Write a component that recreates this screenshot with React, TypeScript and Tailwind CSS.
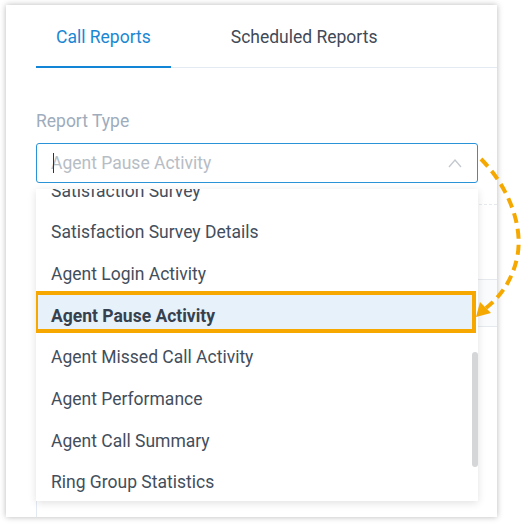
import React from "react";

const items = [
  "Satisfaction Survey",
  "Satisfaction Survey Details",
  "Agent Login Activity",
  "Agent Pause Activity",
  "Agent Missed Call Activity",
  "Agent Performance",
  "Agent Call Summary",
  "Ring Group Statistics",
];

export default function App() {
  return (
    <div
      className="relative w-[521px] h-[526px] bg-white overflow-hidden"
      style={{ fontFamily: "Roboto, 'Noto Sans', sans-serif" }}
    >
      <div className="ml-[6px] mt-[5px] w-[491px] h-[512px] bg-white shadow-[0_0_6px_rgba(0,0,0,0.28)] pl-[30px] pr-[19px] overflow-hidden">
        {/* Tabs */}
        <div className="flex h-[63px] border-b border-[#e4eaf1] -mr-[19px]">
          <div className="relative px-5 pt-[20px] text-[17.5px] leading-6 text-[#1a87d3]">
            Call Reports
            <div className="absolute left-0 right-0 -bottom-px h-[2px] bg-[#1285d6]" />
          </div>
          <div className="ml-10 px-5 pt-[20px] text-[17.5px] leading-6 text-[#3f4a58]">
            Scheduled Reports
          </div>
        </div>

        {/* Label */}
        <div className="mt-[41px] text-[17.5px] leading-6 text-[#9eacbc]">Report Type</div>

        {/* Input + dropdown */}
        <div className="relative mt-[10px]">
          <div className="flex items-center h-[40px] rounded-[3px] border border-[#2a93d8] pl-[14px] pr-[14px]">
            <div className="relative flex-1 text-[17.5px] leading-6 text-[#b7bdc5]">
              <span className="absolute left-[2px] top-[2px] w-px h-[20px] bg-[#333]" />
              Agent Pause Activity
            </div>
            <svg width="14" height="10" viewBox="0 0 14 10" className="mr-[1px]">
              <path d="M1 9 L7 2 L13 9" fill="none" stroke="#c3c8ce" strokeWidth="1.3" />
            </svg>
          </div>

          {/* underlying content */}
          <div className="mt-[21px] border-t border-dashed border-[#e6eaef] -mr-[19px]" />
          <div className="mt-[74px] -mr-[19px] border-l border-[#e3e9f0]">
            <div className="h-[48px] bg-[#fafbfc] border-t border-b border-[#e6eaef]" />
            <div className="h-[200px]" />
          </div>

          {/* Dropdown */}
          <div className="absolute left-0 top-[46px] w-[442px] h-[312px] bg-white shadow-[0_2px_8px_rgba(0,0,0,0.12)] overflow-hidden">
            <div className="-mt-[19px]">
              {items.map((it) => {
                const active = it === "Agent Pause Activity";
                return (
                  <div
                    key={it}
                    className={
                      "relative flex items-center h-[41.67px] px-[15px] text-[17.5px] " +
                      (active ? "font-bold text-[#37414e]" : "text-[#434e5c]")
                    }
                  >
                    {active && (
                      <div className="absolute left-[-2px] right-[2px] top-[-4px] h-[42px] border-4 border-[#f6a800] bg-[#e6f1fa]" />
                    )}
                    <span className="relative">{it}</span>
                  </div>
                );
              })}
            </div>
            <div className="absolute right-0 top-[163px] w-[6px] h-[115px] rounded-full bg-[#d5d6d8]" />
          </div>
        </div>
      </div>

      {/* Annotation arrow */}
      <svg className="absolute left-0 top-0 pointer-events-none" width="521" height="526">
        <path
          d="M481 159 C 508 186, 524 226, 517 258 C 512 281, 500 297, 486 308"
          fill="none"
          stroke="#f5a800"
          strokeWidth="4"
          strokeDasharray="10 6"
        />
        <polygon points="476,317 480,302 491,313" fill="#f5a800" />
      </svg>
    </div>
  );
}
